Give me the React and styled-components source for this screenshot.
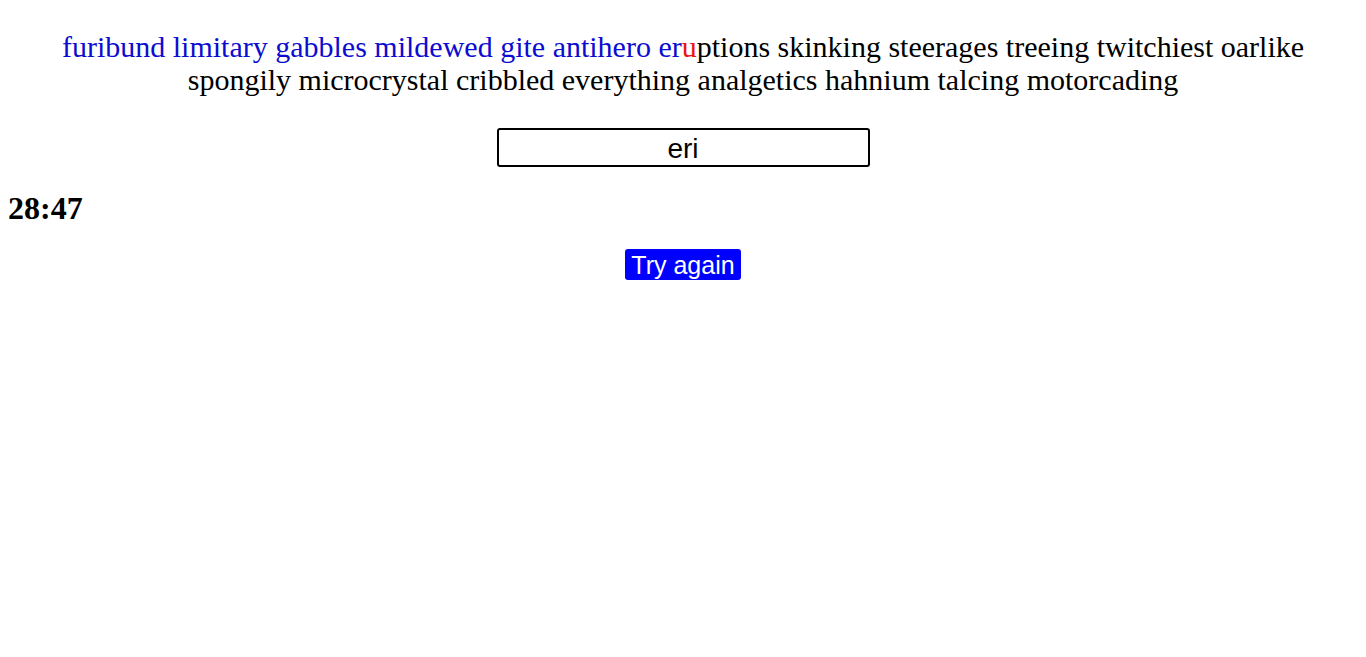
import React, { useState } from "react";
import styled, { createGlobalStyle } from "styled-components";

const GlobalStyle = createGlobalStyle`
  body {
    margin: 8px;
    font-family: "Liberation Serif", "Times New Roman", serif;
    background: #ffffff;
  }
`;

const typed = "furibund limitary gabbles mildewed gite antihero er";
const wrong = "u";
const rest =
  "ptions skinking steerages treeing twitchiest oarlike spongily microcrystal cribbled everything analgetics hahnium talcing motorcading";

const App = () => {
  const [value, setValue] = useState("eri");

  return (
    <>
      <GlobalStyle />
      <Words>
        <Done>{typed}</Done>
        <Wrong>{wrong}</Wrong>
        <span>{rest}</span>
      </Words>
      <InputRow>
        <TypeInput
          type="text"
          value={value}
          autoFocus
          onChange={(e) => setValue(e.target.value)}
        />
      </InputRow>
      <Timer>28:47</Timer>
      <ButtonRow>
        <RetryButton>Try again</RetryButton>
      </ButtonRow>
    </>
  );
};

const Words = styled.p`
  margin: 22px 20px 0;
  text-align: center;
  font-size: 30px;
  line-height: 33px;
  color: #000000;
`;

const Done = styled.span`
  color: #0c0cd0;
`;

const Wrong = styled.span`
  color: #ee1111;
`;

const InputRow = styled.div`
  display: flex;
  justify-content: center;
  margin-top: 32px;
`;

const TypeInput = styled.input`
  width: 373px;
  height: 39px;
  box-sizing: border-box;
  border: 2px solid #000000;
  border-radius: 3px;
  outline: none;
  text-align: center;
  font-family: "Liberation Sans", Arial, sans-serif;
  font-size: 28px;
  padding: 2px 4px 0;
  caret-color: #000000;
`;

const Timer = styled.h1`
  margin: 23px 0 0;
  font-size: 32px;
  font-weight: bold;
`;

const ButtonRow = styled.div`
  display: flex;
  justify-content: center;
  margin-top: 22px;
`;

const RetryButton = styled.button`
  background: #0000ff;
  color: #ffffff;
  border: none;
  border-radius: 3px;
  padding: 1px 6px 0;
  height: 31px;
  font-family: "Liberation Sans", Arial, sans-serif;
  font-size: 25px;
  cursor: pointer;
`;

export default App;
